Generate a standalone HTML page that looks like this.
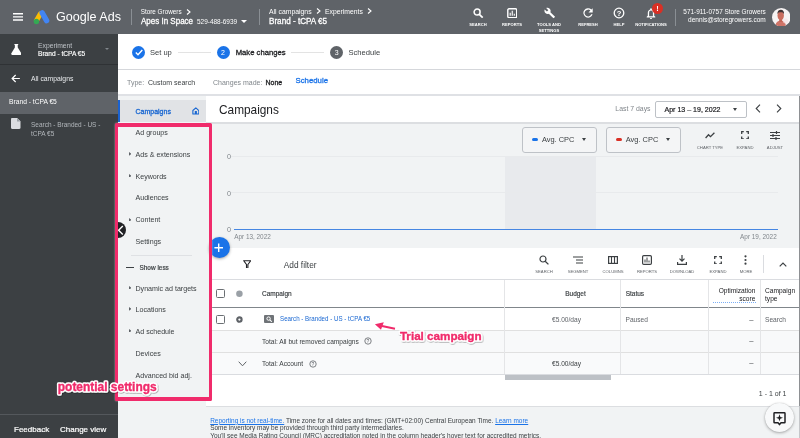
<!DOCTYPE html>
<html>
<head>
<meta charset="utf-8">
<title>Google Ads</title>
<style>
*{box-sizing:border-box;margin:0;padding:0}
html,body{width:800px;height:438px;overflow:hidden;background:#fff;font-family:"Liberation Sans",Arial,sans-serif;color:#3c4043}
.abs{position:absolute}
#root{position:relative;width:800px;height:438px;overflow:hidden;will-change:transform}
.t{position:absolute;white-space:nowrap;line-height:1}
.med{-webkit-text-stroke:.3px}
.sx{transform-origin:0 50%}
#top{left:0;top:0;width:800px;height:34px;background:#5f6368}
#top .t{color:#fff}
.lbl{font-size:4.1px;font-weight:bold;color:#fff;text-align:center;line-height:6.3px}
#side{left:0;top:34px;width:118px;height:404px;background:#3c4043}
#side .t{color:#e8eaed}
#step{left:118px;top:34px;width:682px;height:36px;background:#fff;border-bottom:1px solid #d5d7db}
#typerow{left:118px;top:70px;width:682px;height:26px;background:#fff;border-bottom:2px solid #dfe1e5}
#nav{left:118px;top:96px;width:88px;height:342px;background:#f1f3f4}
#nav .t{font-size:7.1px;color:#3c4043}
.tri{position:absolute;width:0;height:0;border-left:2.600px solid #5f6368;border-top:1.900px solid transparent;border-bottom:1.900px solid transparent;margin-top:.2px}
#main{left:206px;top:96px;width:594px;height:342px;background:#fff}
#mi{left:1px;top:0;width:593px;height:342px}
.gl{position:absolute;left:24px;width:546.5px;height:1px;background:#e8eaec}
.btn{position:absolute;height:26px;border:1px solid #bec2c7;border-radius:3px;background:#f4f5f6}
.hd{font-size:6.5px;color:#3c4043}.hd.med{-webkit-text-stroke:.17px}
.cell{font-size:6.6px;color:#5f6368}
.vl{position:absolute;width:1px;background:#e4e5e7}
.hl{position:absolute;height:1px;background:#e0e0e0}
.cb{position:absolute;width:9px;height:9px;border:1.25px solid #6b6f73;border-radius:1.5px;background:#fff}
.sl{font-size:4.2px;color:#5f6368;text-align:center}
.car{position:absolute;width:0;height:0;border-top:3px solid #3c4043;border-left:2.900px solid transparent;border-right:2.900px solid transparent}
</style>
</head>
<body>
<div id="root">

<!-- TOP BAR -->
<div id="top" class="abs">
  <svg class="abs" style="left:12.5px;top:13px" width="10.5" height="8" viewBox="0 0 10.5 8"><path d="M0 .8h10.500M0 3.900h10.500M0 7h10.500" stroke="#fff" stroke-width="1.400"/></svg>
  <svg class="abs" style="left:33.300px;top:8.900px" width="18" height="17" viewBox="0 0 18 17">
    <path d="M7.400 4.800 L3.500 11.600" stroke="#fbbc04" stroke-width="5" stroke-linecap="round"/>
    <path d="M9.200 3.900 L13.600 11.700" stroke="#4285f4" stroke-width="5.400" stroke-linecap="round"/>
    <circle cx="3.400" cy="12.500" r="2.700" fill="#34a853"/>
  </svg>
  <span class="t sx" style="left:56px;top:9.800px;font-size:13.300px;transform:scaleX(.945)">Google Ads</span>
  <div class="abs" style="left:131px;top:9px;width:1px;height:16px;background:#8a8f94"></div>
  <span class="t" style="left:140.700px;top:8.800px;font-size:6.350px">Store Growers</span>
  <svg class="abs" style="left:185.500px;top:8.900px" width="5" height="6" viewBox="0 0 5 6"><path d="M1 .500 4 3 1 5.500" fill="none" stroke="#fff" stroke-width="1.100"/></svg>
  <span class="t med sx" style="left:140.700px;top:16.600px;font-size:9px;transform:scaleX(.889)">Apes In Space</span>
  <span class="t" style="left:197px;top:18.900px;font-size:6.450px">529-488-6939</span>
  <div class="abs" style="left:241px;top:20.200px;width:0;height:0;border-top:3px solid #fff;border-left:3px solid transparent;border-right:3px solid transparent"></div>
  <div class="abs" style="left:258.800px;top:9px;width:1px;height:16px;background:#8a8f94"></div>
  <span class="t" style="left:269px;top:8.800px;font-size:6.850px">All campaigns</span>
  <svg class="abs" style="left:315.500px;top:8.400px" width="5" height="6" viewBox="0 0 5 6"><path d="M1 .500 4 3 1 5.500" fill="none" stroke="#fff" stroke-width="1.100"/></svg>
  <span class="t" style="left:325px;top:8.800px;font-size:6.800px">Experiments</span>
  <svg class="abs" style="left:367.300px;top:8.400px" width="5" height="6" viewBox="0 0 5 6"><path d="M1 .500 4 3 1 5.500" fill="none" stroke="#fff" stroke-width="1.100"/></svg>
  <span class="t med sx" style="left:269px;top:16.600px;font-size:9px;transform:scaleX(.902)">Brand - tCPA €5</span>

  <!-- icons -->
  <svg class="abs" style="left:473px;top:7.500px" width="10.500" height="10.500" viewBox="0 0 10.500 10.500"><circle cx="4.100" cy="4.100" r="3" fill="none" stroke="#fff" stroke-width="1.500"/><path d="M6.300 6.300 9.700 9.700" stroke="#fff" stroke-width="1.700"/></svg>
  <div class="t lbl" style="left:464px;top:21.900px;width:28px">SEARCH</div>
  <svg class="abs" style="left:506.800px;top:7.500px" width="10.500" height="10.500" viewBox="0 0 10.500 10.500"><rect x=".800" y=".800" width="8.900" height="8.900" rx="1.200" fill="none" stroke="#fff" stroke-width="1.400"/><path d="M3.200 7.700v-3M5.250 7.700v-5M7.300 7.700v-2" stroke="#fff" stroke-width="1.100"/></svg>
  <div class="t lbl" style="left:498px;top:21.900px;width:28px">REPORTS</div>
  <svg class="abs" style="left:543.500px;top:6.800px" width="12" height="12" viewBox="0 0 12 12"><path d="M10.800 9.600 6.400 5.200c.500-1.200.200-2.500-.700-3.400C4.700.800 3.300.600 2.200 1.100L4.300 3.200 2.900 4.600.700 2.500C.200 3.600.400 5 1.400 6c.900.900 2.300 1.200 3.400.700l4.400 4.400c.200.200.500.200.700 0l1-1c.200-.200.200-.400-.100-.500z" fill="#fff"/></svg>
  <div class="t lbl" style="left:530px;top:21.900px;width:38px">TOOLS AND<br>SETTINGS</div>
  <svg class="abs" style="left:582px;top:6.800px" width="12" height="12" viewBox="0 0 12 12"><path d="M9.400 2.600A4.700 4.700 0 1 0 10.600 7.200H9.200A3.400 3.400 0 1 1 8.400 3.600L6.500 5.500h4.200V1.300z" fill="#fff"/></svg>
  <div class="t lbl" style="left:573px;top:21.900px;width:30px">REFRESH</div>
  <svg class="abs" style="left:613px;top:6.800px" width="12" height="12" viewBox="0 0 12 12"><circle cx="6" cy="6" r="4.800" fill="none" stroke="#fff" stroke-width="1.300"/><text x="6" y="8.700" font-size="7.600" font-weight="bold" text-anchor="middle" fill="#fff" font-family="Liberation Sans, sans-serif">?</text></svg>
  <div class="t lbl" style="left:604px;top:21.900px;width:30px">HELP</div>
  <svg class="abs" style="left:645px;top:6.500px" width="13" height="13" viewBox="0 0 13 13"><path d="M6 1.200c-.500 0-.800.300-.800.800v.400C3.700 2.800 2.800 4.100 2.800 5.700v3L1.700 9.800v.600h8.600v-.600L9.200 8.700v-3c0-1.600-.900-2.900-2.400-3.300V2c0-.500-.300-.800-.800-.800zM4.100 5.700c0-1.300.800-2.200 1.900-2.200s1.900.900 1.900 2.200v3.500H4.100zM5 11h2c0 .600-.400 1-1 1s-1-.400-1-1z" fill="#fff"/></svg>
  <div class="abs" style="left:652px;top:3.300px;width:11px;height:11px;border-radius:50%;background:#d93025"></div>
  <span class="t" style="left:656.300px;top:5.200px;font-size:7.500px;font-weight:bold">!</span>
  <div class="t lbl" style="left:632px;top:21.900px;width:38px">NOTIFICATIONS</div>
  <div class="abs" style="left:675px;top:8.500px;width:1px;height:17px;background:#8a8f94"></div>
  <span class="t" style="right:34.200px;top:8.700px;font-size:6.420px">571-911-0757 Store Growers</span>
  <span class="t" style="right:34.200px;top:16.600px;font-size:6.540px">dennis@storegrowers.com</span>
  <svg class="abs" style="left:771.800px;top:7.800px" width="18.600" height="18.600" viewBox="0 0 18.600 18.600"><defs><clipPath id="av"><circle cx="9.300" cy="9.300" r="9.300"/></clipPath></defs><g clip-path="url(#av)"><rect width="18.600" height="18.600" fill="#f6f3f3"/><path d="M3.500 18.600C3.500 14.500 5.500 12.800 8.700 12.800S13.800 14.500 14 18.600z" fill="#cf7468"/><rect x="7.200" y="10" width="3" height="4" fill="#c26556"/><ellipse cx="8.700" cy="7.600" rx="3.200" ry="4.200" fill="#c96d5e"/><path d="M5.400 6.200C5.200 3.200 6.800 1.800 8.900 1.800S12.300 3.400 12 6.200C11.300 4.600 10.200 4.300 8.700 4.300S6.100 4.600 5.400 6.200z" fill="#3f3233"/><circle cx="13.500" cy="13" r="2.500" fill="#f7dfe3" opacity=".700"/></g></svg>
</div>

<!-- SIDEBAR -->
<div id="side" class="abs">
  <svg class="abs" style="left:10.600px;top:10px" width="10.600" height="11" viewBox="0 0 11.500 11" preserveAspectRatio="none"><path d="M3.700 0h4.100v1.100H7.300v2.500l3.800 5.600c.500.800 0 1.800-.900 1.800H1.300c-.900 0-1.400-1-.900-1.800l3.800-5.600V1.100H3.700z" fill="#fff"/></svg>
  <span class="t" style="left:38px;top:9.300px;font-size:6.750px;color:#bdc1c6">Experiment</span>
  <span class="t" style="left:38px;top:16.700px;font-size:6.600px;color:#fff;-webkit-text-stroke:.15px">Brand - tCPA €5</span>
  <div class="abs" style="left:104.700px;top:14.400px;width:0;height:0;border-top:2.500px solid #80868b;border-left:2.500px solid transparent;border-right:2.500px solid transparent"></div>
  <div class="abs" style="left:0;top:29.800px;width:118px;height:1px;background:#2f3235"></div>
  <svg class="abs" style="left:11.200px;top:39.800px" width="9.300" height="9" viewBox="0 0 9 9"><path d="M8.700 4.500H1.200M4.500 1 1 4.500 4.500 8" fill="none" stroke="#fff" stroke-width="1.200"/></svg>
  <span class="t" style="left:31px;top:42.200px;font-size:6.800px">All campaigns</span>
  <div class="abs" style="left:0;top:58px;width:118px;height:22px;background:#5f6368"></div>
  <span class="t" style="left:9px;top:65px;font-size:6.700px;color:#fff">Brand - tCPA €5</span>
  <svg class="abs" style="left:11px;top:84.300px" width="9.500" height="11" viewBox="0 0 9.500 11"><path d="M1.200 0h5L9.500 3.300V9.800c0 .700-.500 1.200-1.200 1.200H1.200C.500 11 0 10.500 0 9.800V1.200C0 .500.500 0 1.200 0z" fill="#dadce0"/><path d="M6 0v3.500h3.500z" fill="#9aa0a6"/></svg>
  <span class="t" style="left:31px;top:87px;font-size:6.480px;color:#b2b6bb;line-height:8.800px;white-space:normal;width:84px">Search - Branded - US -<br>tCPA €5</span>
  <div class="abs" style="left:0;top:380px;width:118px;height:1px;background:#54585c"></div>
  <span class="t" style="left:14px;top:391.500px;font-size:8px;color:#fff;-webkit-text-stroke:.2px">Feedback</span>
  <span class="t" style="left:60px;top:391.500px;font-size:8px;color:#fff;-webkit-text-stroke:.2px">Change view</span>
</div>

<!-- STEPPER -->
<div id="step" class="abs">
  <div class="abs" style="left:14px;top:11.500px;width:13px;height:13px;border-radius:50%;background:#1a73e8"></div>
  <svg class="abs" style="left:16.500px;top:14.600px" width="8" height="7" viewBox="0 0 8 7"><path d="M.800 3.600 3 5.800 7.300 1" fill="none" stroke="#fff" stroke-width="1.400"/></svg>
  <span class="t" style="left:32px;top:14.600px;font-size:7.550px;color:#3c4043">Set up</span>
  <div class="abs" style="left:60px;top:18px;width:33px;height:1px;background:#e3e3e3"></div>
  <div class="abs" style="left:98.500px;top:11.500px;width:13px;height:13px;border-radius:50%;background:#1a73e8"></div>
  <span class="t" style="left:103px;top:15.300px;font-size:7px;color:#fff">2</span>
  <span class="t med" style="left:117.700px;top:14.600px;font-size:7.700px;color:#202124">Make changes</span>
  <div class="abs" style="left:173px;top:18px;width:33px;height:1px;background:#e3e3e3"></div>
  <div class="abs" style="left:212.200px;top:11.500px;width:13px;height:13px;border-radius:50%;background:#5f6368"></div>
  <span class="t" style="left:216.700px;top:15.300px;font-size:7px;color:#fff">3</span>
  <span class="t" style="left:230.500px;top:14.600px;font-size:7.600px;color:#3c4043">Schedule</span>
</div>

<!-- TYPE ROW -->
<div id="typerow" class="abs">
  <span class="t" style="left:9px;top:9px;font-size:7px;color:#80868b">Type:</span>
  <span class="t" style="left:30px;top:9px;font-size:7px;color:#3c4043">Custom search</span>
  <span class="t" style="left:95px;top:9px;font-size:7px;color:#80868b">Changes made:</span>
  <span class="t med" style="left:147.500px;top:9px;font-size:7px;color:#202124">None</span>
  <span class="t med" style="left:177.500px;top:6.500px;font-size:7.800px;color:#1a73e8">Schedule</span>
</div>

<!-- NAV -->
<div id="nav" class="abs">
  <div class="abs" style="left:0;top:4px;width:88px;height:21.500px;background:#e1e3e6;border-left:2.300px solid #1a62d0"></div>
  <span class="t med" style="left:17.500px;top:11.700px;color:#1967d2;font-size:7px">Campaigns</span>
  <svg class="abs" style="left:73.500px;top:11.200px" width="7.700" height="7.700" viewBox="0 0 8 8"><path d="M4 .900 .900 3.600V7.300H7.100V3.600z" fill="none" stroke="#1967d2" stroke-width="1.150" stroke-linejoin="round"/><rect x="2.900" y="4.200" width="2.200" height="3.100" fill="#1967d2"/></svg>
  <span class="t" style="left:17.500px;top:33.900px">Ad groups</span>
  <svg class="abs" style="left:10.900px;top:55.9px" width="2.500" height="3.800" viewBox="0 0 2.500 3.800"><polygon points="0,0 2.500,1.900 0,3.800" fill="#5f6368"/></svg><span class="t" style="left:17.500px;top:55.700px">Ads &amp; extensions</span>
  <svg class="abs" style="left:10.900px;top:77.6px" width="2.500" height="3.800" viewBox="0 0 2.500 3.800"><polygon points="0,0 2.500,1.900 0,3.800" fill="#5f6368"/></svg><span class="t" style="left:17.500px;top:78.100px">Keywords</span>
  <span class="t" style="left:17.500px;top:99.400px">Audiences</span>
  <svg class="abs" style="left:10.900px;top:121.6px" width="2.500" height="3.800" viewBox="0 0 2.500 3.800"><polygon points="0,0 2.500,1.900 0,3.800" fill="#5f6368"/></svg><span class="t" style="left:17.500px;top:121.400px">Content</span>
  <span class="t" style="left:17.500px;top:143.100px">Settings</span>
  <div class="abs" style="left:12.500px;top:158.500px;width:61px;height:1px;background:#dfe1e4"></div>
  <div class="abs" style="left:8.300px;top:170.800px;width:7.600px;height:1.300px;background:#3c4043"></div>
  <span class="t med" style="left:21.500px;top:168.900px;font-size:6.450px;color:#3c4043;-webkit-text-stroke:.2px">Show less</span>
  <svg class="abs" style="left:10.900px;top:189.7px" width="2.500" height="3.800" viewBox="0 0 2.500 3.800"><polygon points="0,0 2.500,1.900 0,3.800" fill="#5f6368"/></svg><span class="t" style="left:17.500px;top:189.500px">Dynamic ad targets</span>
  <svg class="abs" style="left:10.900px;top:211.1px" width="2.500" height="3.800" viewBox="0 0 2.500 3.800"><polygon points="0,0 2.500,1.900 0,3.800" fill="#5f6368"/></svg><span class="t" style="left:17.500px;top:210.900px">Locations</span>
  <svg class="abs" style="left:10.900px;top:232.7px" width="2.500" height="3.800" viewBox="0 0 2.500 3.800"><polygon points="0,0 2.500,1.900 0,3.800" fill="#5f6368"/></svg><span class="t" style="left:17.500px;top:232.500px">Ad schedule</span>
  <span class="t" style="left:17.500px;top:254.500px">Devices</span>
  <span class="t" style="left:17.500px;top:276.600px">Advanced bid adj.</span>
</div>

<!-- MAIN -->
<div id="main" class="abs"><div id="mi" class="abs">
  <span class="t sx" style="left:12px;top:6.500px;font-size:13.300px;color:#202124;transform:scaleX(.89)">Campaigns</span>
  <span class="t" style="left:408.300px;top:10.300px;font-size:6.900px;color:#80868b">Last 7 days</span>
  <div class="abs" style="left:448px;top:4.800px;width:92px;height:17.500px;border:1px solid #bdc1c6;border-radius:2px;background:#fff"></div>
  <span class="t" style="left:457.500px;top:9.800px;font-size:7.050px;color:#202124;-webkit-text-stroke:.2px">Apr 13 – 19, 2022</span>
  <div class="car" style="left:525.800px;top:11.700px"></div>
  <svg class="abs" style="left:547.500px;top:8px" width="6" height="9" viewBox="0 0 6 9"><path d="M5 .700 1.200 4.500 5 8.300" fill="none" stroke="#3c4043" stroke-width="1.100"/></svg>
  <svg class="abs" style="left:569.200px;top:8px" width="6" height="9" viewBox="0 0 6 9"><path d="M1 .700 4.800 4.500 1 8.300" fill="none" stroke="#3c4043" stroke-width="1.100"/></svg>

  <!-- chart -->
  <div class="abs" style="left:-1px;top:25.500px;width:594px;height:126.500px;background:#f1f3f4;border-top:2px solid #dcdee1"></div>
  <div class="abs" style="left:298px;top:59.800px;width:91px;height:73px;background:#e8eaed"></div>
  <div class="gl" style="top:59.800px"></div>
  <div class="gl" style="top:95.800px"></div>
  <div class="abs" style="left:26.500px;top:132.700px;width:544px;height:1.800px;background:#4686e2"></div>
  <span class="t" style="left:20px;top:56.800px;font-size:7.200px;color:#80868b">0</span>
  <span class="t" style="left:20px;top:93.700px;font-size:7.200px;color:#80868b">0</span>
  <span class="t" style="left:20px;top:129.600px;font-size:7.200px;color:#80868b">0</span>
  <span class="t" style="left:27.200px;top:137.700px;font-size:6.400px;color:#80868b">Apr 13, 2022</span>
  <span class="t" style="right:23.300px;top:137.700px;font-size:6.400px;color:#80868b">Apr 19, 2022</span>

  <div class="btn" style="left:314.600px;top:30.700px;width:75.200px"></div>
  <div class="abs" style="left:325.400px;top:42.100px;width:6px;height:3px;border-radius:1.500px;background:#1a73e8"></div>
  <span class="t" style="left:334.900px;top:40.200px;font-size:7.450px;color:#3c4043">Avg. CPC</span>
  <div class="car" style="left:375.400px;top:42.200px"></div>
  <div class="btn" style="left:398.500px;top:30.700px;width:75.200px"></div>
  <div class="abs" style="left:409.400px;top:42.100px;width:6px;height:3px;border-radius:1.500px;background:#d93025"></div>
  <span class="t" style="left:418.800px;top:40.200px;font-size:7.450px;color:#3c4043">Avg. CPC</span>
  <div class="car" style="left:459.300px;top:42.200px"></div>

  <svg class="abs" style="left:497.500px;top:36px" width="10" height="7" viewBox="0 0 10 7"><path d="M.600 6 3.500 2.700 5.500 4.700 9.400 .800" fill="none" stroke="#3c4043" stroke-width="1.300"/></svg>
  <span class="t sl" style="left:488px;top:50px;width:30px">CHART TYPE</span>
  <svg class="abs" style="left:533.500px;top:34.700px" width="8" height="8.500" viewBox="0 0 8 8.500"><path d="M.700 3V.700H2.800M5.200 .700H7.300V3M7.300 5.500V7.800H5.200M2.800 7.800H.700V5.500" fill="none" stroke="#3c4043" stroke-width="1.300"/></svg>
  <span class="t sl" style="left:523px;top:50px;width:30px">EXPAND</span>
  <svg class="abs" style="left:563px;top:34.500px" width="10" height="9" viewBox="0 0 10 9"><path d="M0 1.500H10M0 4.500H10M0 7.500H10" stroke="#3c4043" stroke-width="1"/><path d="M6.500 0V3M3 3V6M6 6V9" stroke="#3c4043" stroke-width="1.200"/></svg>
  <span class="t sl" style="left:553px;top:50px;width:30px">ADJUST</span>

  <!-- toolbar -->
  <svg class="abs" style="left:36px;top:163.600px" width="8.400" height="8.800" viewBox="0 0 8.400 8.800"><path d="M.700 .700H7.700L4.900 4.500V8.200H3.500V4.500z" fill="none" stroke="#202124" stroke-width="1.100" stroke-linejoin="round"/></svg>
  <span class="t" style="left:76.800px;top:165.200px;font-size:8.300px;color:#3c4043">Add filter</span>

  <svg class="abs" style="left:332px;top:158.800px" width="10" height="10" viewBox="0 0 10 10"><circle cx="4" cy="4" r="3" fill="none" stroke="#3c4043" stroke-width="1.200"/><path d="M6.200 6.200 9.400 9.400" stroke="#3c4043" stroke-width="1.300"/></svg>
  <span class="t sl" style="left:322px;top:174px;width:30px">SEARCH</span>
  <svg class="abs" style="left:366px;top:160px" width="10" height="8" viewBox="0 0 10 8"><path d="M0 1H10M3 4H10M3 7H10" stroke="#3c4043" stroke-width="1.200"/></svg>
  <span class="t sl" style="left:356px;top:174px;width:30px">SEGMENT</span>
  <svg class="abs" style="left:401px;top:160px" width="10" height="8" viewBox="0 0 10 8"><rect x=".600" y=".600" width="8.800" height="6.800" fill="none" stroke="#3c4043" stroke-width="1.200"/><path d="M3.500 .500V7.500M6.500 .500V7.500" stroke="#3c4043" stroke-width="1.100"/></svg>
  <span class="t sl" style="left:391px;top:174px;width:30px">COLUMNS</span>
  <svg class="abs" style="left:435px;top:159px" width="10" height="10" viewBox="0 0 10 10"><rect x=".600" y=".600" width="8.800" height="8.800" rx="1.200" fill="none" stroke="#3c4043" stroke-width="1.200"/><path d="M3 7.500V4.500M5 7.500V2.500M7 7.500V5.500" stroke="#3c4043" stroke-width="1"/></svg>
  <span class="t sl" style="left:425px;top:174px;width:30px">REPORTS</span>
  <svg class="abs" style="left:470px;top:159px" width="10" height="10" viewBox="0 0 10 10"><path d="M5 0V6M2.500 3.700 5 6.200 7.500 3.700M.600 7V9.300H9.400V7" fill="none" stroke="#3c4043" stroke-width="1.200"/></svg>
  <span class="t sl" style="left:457px;top:174px;width:36px">DOWNLOAD</span>
  <svg class="abs" style="left:506.500px;top:159.700px" width="8" height="8.500" viewBox="0 0 8 8.500"><path d="M.700 3V.700H2.800M5.200 .700H7.300V3M7.300 5.500V7.800H5.200M2.800 7.800H.700V5.500" fill="none" stroke="#3c4043" stroke-width="1.300"/></svg>
  <span class="t sl" style="left:496px;top:174px;width:30px">EXPAND</span>
  <svg class="abs" style="left:537px;top:159px" width="3" height="10" viewBox="0 0 3 10"><circle cx="1.500" cy="1.300" r="1.100" fill="#3c4043"/><circle cx="1.500" cy="5" r="1.100" fill="#3c4043"/><circle cx="1.500" cy="8.700" r="1.100" fill="#3c4043"/></svg>
  <span class="t sl" style="left:524px;top:174px;width:30px">MORE</span>
  <div class="abs" style="left:556px;top:159px;width:1px;height:18px;background:#dadce0"></div>
  <svg class="abs" style="left:572px;top:166px" width="8" height="5" viewBox="0 0 8 5"><path d="M.700 4.300 4 1 7.300 4.300" fill="none" stroke="#3c4043" stroke-width="1.200"/></svg>

  <!-- table -->
  <div class="hl" style="left:-1px;top:182.700px;width:594px;background:#dadce0"></div>
  <div class="hl" style="left:-1px;top:210.600px;width:594px;background:#80868b"></div>
  <div class="hl" style="left:-1px;top:234px;width:594px"></div>
  <div class="hl" style="left:-1px;top:256.200px;width:594px"></div>
  <div class="hl" style="left:-1px;top:278.300px;width:594px;background:#dadce0"></div>
  <div class="abs" style="left:-1px;top:235px;width:594px;height:21.200px;background:#f8f9fa"></div>
  <div class="abs" style="left:-1px;top:257.200px;width:594px;height:21.100px;background:#f9fafb"></div>
  <div class="vl" style="left:297px;top:184px;height:94.300px"></div>
  <div class="vl" style="left:413px;top:184px;height:94.300px"></div>
  <div class="vl" style="left:500.600px;top:184px;height:94.300px"></div>
  <div class="vl" style="left:553px;top:184px;height:94.300px"></div>

  <div class="cb" style="left:9.400px;top:193px"></div>
  <svg class="abs" style="left:28px;top:193px" width="9" height="9" viewBox="0 0 9 9"><circle cx="4.400" cy="4.700" r="3.250" fill="#9aa0a6"/></svg>
  <span class="t hd med" style="left:55px;top:194.600px">Campaign</span>
  <span class="t hd med" style="left:358.200px;top:194.800px">Budget</span>
  <span class="t hd med" style="left:418.700px;top:194.800px">Status</span>
  <span class="t hd" style="right:44.700px;top:191.800px;color:#202124;font-size:6.600px">Optimization</span>
  <span class="t hd" style="right:44.700px;top:199.600px;color:#202124;font-size:6.600px">score</span>
  <div class="abs" style="left:505.500px;top:206px;width:43px;height:0;border-top:1px dotted #7aaef5"></div>
  <span class="t hd" style="left:558px;top:191.800px;color:#202124;font-size:6.600px">Campaign</span>
  <span class="t hd" style="left:558px;top:199.600px;color:#202124;font-size:6.600px">type</span>

  <div class="cb" style="left:9.400px;top:218.600px"></div>
  <svg class="abs" style="left:28px;top:218.500px" width="9" height="9" viewBox="0 0 9 9"><circle cx="4.400" cy="4.600" r="2.200" fill="#fff" stroke="#5f6368" stroke-width="2.100"/></svg>
  <div class="abs" style="left:57px;top:219px;width:10.300px;height:8.300px;border-radius:1px;background:#6f7377"></div>
  <svg class="abs" style="left:59.200px;top:220.100px" width="6.400" height="6.400" viewBox="0 0 6.400 6.400"><circle cx="2.600" cy="2.600" r="1.700" fill="none" stroke="#fff" stroke-width="1"/><path d="M3.900 3.900 5.800 5.800" stroke="#fff" stroke-width="1.100"/></svg>
  <span class="t cell sx" style="left:72.800px;top:220px;color:#1967d2;font-size:6.800px;transform:scaleX(.91)">Search - Branded - US - tCPA €5</span>
  <span class="t cell" style="left:345px;top:220.900px">€5.00/day</span>
  <span class="t cell" style="left:418.500px;top:220.900px">Paused</span>
  <span class="t cell" style="left:542.300px;top:220.900px;font-size:7.600px;color:#3c4043;margin-top:-1.4px">–</span>
  <span class="t cell" style="left:558px;top:220.900px">Search</span>

  <span class="t cell" style="left:55px;top:242.500px;color:#3c4043">Total: All but removed campaigns</span>
  <svg class="abs" style="left:157px;top:241.300px" width="8" height="8" viewBox="0 0 8 8"><circle cx="4" cy="4" r="3.200" fill="none" stroke="#5f6368" stroke-width=".800"/><text x="4" y="5.900" font-size="5" text-anchor="middle" fill="#5f6368" font-family="Liberation Sans, sans-serif">?</text></svg>
  <span class="t cell" style="left:542.300px;top:242.300px;font-size:7.600px;color:#3c4043;margin-top:-1.7px">–</span>

  <svg class="abs" style="left:31px;top:264.500px" width="9" height="6" viewBox="0 0 9 6"><path d="M.700 .700 4.500 4.800 8.300 .700" fill="none" stroke="#5f6368" stroke-width="1"/></svg>
  <span class="t cell" style="left:55px;top:264.800px;color:#3c4043">Total: Account</span>
  <svg class="abs" style="left:102px;top:263.600px" width="8" height="8" viewBox="0 0 8 8"><circle cx="4" cy="4" r="3.200" fill="none" stroke="#5f6368" stroke-width=".800"/><text x="4" y="5.900" font-size="5" text-anchor="middle" fill="#5f6368" font-family="Liberation Sans, sans-serif">?</text></svg>
  <span class="t cell" style="left:345px;top:265px;color:#3c4043">€5.00/day</span>
  <span class="t cell" style="left:542.300px;top:265px;font-size:7.600px;color:#3c4043;margin-top:-2.2px">–</span>

  <div class="abs" style="left:297.700px;top:279.300px;width:106px;height:4.500px;background:#bdc1c6"></div>
  <span class="t" style="left:551.800px;top:294.400px;font-size:7px;color:#3c4043">1 - 1 of 1</span>

  <!-- footer -->
  <div class="abs" style="left:-1px;top:310px;width:594px;height:32px;background:#f1f3f4;border-top:1px solid #dcdee1"></div>
  <span class="t" style="left:3.200px;top:321.800px;font-size:6.470px;color:#3c4043"><span style="color:#1a73e8;text-decoration:underline">Reporting is not real-time.</span> Time zone for all dates and times: (GMT+02:00) Central European Time. <span style="color:#1a73e8;text-decoration:underline">Learn more</span></span>
  <span class="t" style="left:3.200px;top:329.200px;font-size:6.490px;color:#3c4043">Some inventory may be provided through third party intermediaries.</span>
  <span class="t" style="left:3.200px;top:336.800px;font-size:6.490px;color:#3c4043">You'll see Media Rating Council (MRC) accreditation noted in the column header's hover text for accredited metrics.</span>

  <div class="abs" style="left:557.900px;top:306.500px;width:29px;height:29px;border-radius:50%;background:#f8f9fa;box-shadow:0 1px 3px rgba(0,0,0,.300),0 0 1px rgba(0,0,0,.200)"></div>
  <svg class="abs" style="left:565px;top:314.500px" width="15" height="15" viewBox="0 0 15 15"><path d="M2.600 1.800H12.400Q13 1.800 13 2.400V11.200Q13 11.800 12.400 11.800H9L7.500 13.600 6 11.800H2.600Q2 11.800 2 11.200V2.400Q2 1.800 2.600 1.800z" fill="none" stroke="#202124" stroke-width="1.500" stroke-linejoin="round"/><path d="M7.500 3.300 8.400 5.900 11 6.800 8.400 7.700 7.500 10.300 6.600 7.700 4 6.800 6.600 5.900z" fill="#202124"/></svg>
</div></div>

<!-- overlays -->
<div class="abs" style="left:206px;top:124px;width:3px;height:275px;background:#f1f3f4"></div>
<div class="abs" style="left:798.700px;top:96px;width:1.300px;height:310px;background:#8e9093"></div>
<div class="abs" style="left:798.700px;top:406px;width:1.300px;height:32px;background:#c5c7ca"></div>
<div class="abs" style="left:118px;top:221.500px;width:8.300px;height:16.600px;border-radius:0 8.300px 8.300px 0;background:#202124"></div>
<svg class="abs" style="left:116.600px;top:224.700px" width="7" height="10.400" viewBox="0 0 7 10.400"><path d="M5.800 1 1.600 5.200 5.800 9.400" fill="none" stroke="#fff" stroke-width="1.400"/></svg>
<div class="abs" style="left:208.500px;top:237px;width:21px;height:21px;border-radius:50%;background:#1a73e8;box-shadow:0 1px 3px rgba(0,0,0,.350)"></div>
<svg class="abs" style="left:214.300px;top:242.800px" width="9.400" height="9.400" viewBox="0 0 9.400 9.400"><path d="M4.700 .400V9M.400 4.700H9" stroke="#fff" stroke-width="1.400"/></svg>

<div class="abs" style="left:114.800px;top:122.500px;width:97.200px;height:278px;border:3.700px solid #f02b6b;border-top-width:4px;border-bottom-width:4px;border-radius:1.500px;box-shadow:0 0 1.500px rgba(255,255,255,.800)"></div>

<svg class="abs" style="left:0;top:0" width="800" height="438" viewBox="0 0 800 438">
  <defs><filter id="sh" x="-5%" y="-20%" width="110%" height="150%"><feDropShadow dx=".600" dy=".800" stdDeviation=".600" flood-color="#000" flood-opacity=".350"/></filter></defs>
  <g font-family="Liberation Sans, Arial, sans-serif" font-weight="bold" fill="#fff" stroke="#fff" stroke-width="3.300" stroke-linejoin="round" filter="url(#sh)">
    <text x="57.800" y="391.100" font-size="11.950">potential settings</text>
    <text x="399.900" y="339.650" font-size="11.670">Trial campaign</text>
  </g>
  <g font-family="Liberation Sans, Arial, sans-serif" font-weight="bold" fill="#f02b6b" stroke="#f02b6b" stroke-width=".350" stroke-linejoin="round">
    <text x="57.800" y="391.100" font-size="11.950">potential settings</text>
    <text x="399.900" y="339.650" font-size="11.670">Trial campaign</text>
  </g>
  <path d="M382 326 395 328.700" stroke="#f02b6b" stroke-width="2" fill="none"/>
  <path d="M374.900 324.300 383.800 322.300 381 329.700z" fill="#f02b6b"/>
</svg>

</div>
</body>
</html>
